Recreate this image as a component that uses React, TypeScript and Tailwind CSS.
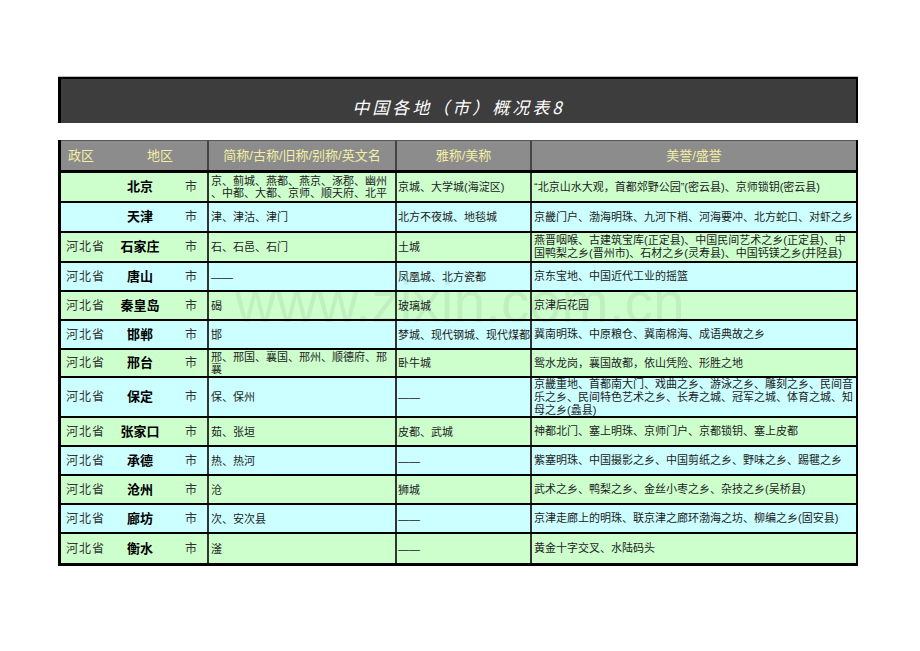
import React from "react";

type Row = {
  prov: string;
  name: string;
  abbr: string;
  alias: string;
  honor: string;
  h: string;
};

const rows: Row[] = [
  { prov: "", name: "北京", abbr: "京、蓟城、燕都、燕京、涿郡、幽州、中都、大都、京师、顺天府、北平", alias: "京城、大学城(海淀区)", honor: "“北京山水大观，首都郊野公园”(密云县)、京师锁钥(密云县)", h: "h-[30px]" },
  { prov: "", name: "天津", abbr: "津、津沽、津门", alias: "北方不夜城、地毯城", honor: "京畿门户、渤海明珠、九河下梢、河海要冲、北方蛇口、对虾之乡", h: "h-[30px]" },
  { prov: "河北省", name: "石家庄", abbr: "石、石邑、石门", alias: "土城", honor: "燕晋咽喉、古建筑宝库(正定县)、中国民间艺术之乡(正定县)、中国鸭梨之乡(晋州市)、石材之乡(灵寿县)、中国钙镁之乡(井陉县)", h: "h-[30px]" },
  { prov: "河北省", name: "唐山", abbr: "——", alias: "凤凰城、北方瓷都", honor: "京东宝地、中国近代工业的摇篮", h: "h-[29px]" },
  { prov: "河北省", name: "秦皇岛", abbr: "碣", alias: "玻璃城", honor: "京津后花园", h: "h-[29px]" },
  { prov: "河北省", name: "邯郸", abbr: "邯", alias: "梦城、现代钢城、现代煤都", honor: "冀南明珠、中原粮仓、冀南棉海、成语典故之乡", h: "h-[29px]" },
  { prov: "河北省", name: "邢台", abbr: "邢、邢国、襄国、邢州、顺德府、邢襄", alias: "卧牛城", honor: "鸳水龙岗，襄国故都，依山凭险、形胜之地", h: "h-[28px]" },
  { prov: "河北省", name: "保定", abbr: "保、保州", alias: "——", honor: "京畿重地、首都南大门、戏曲之乡、游泳之乡、雕刻之乡、民间音乐之乡、民间特色艺术之乡、长寿之城、冠军之城、体育之城、知母之乡(蠡县)", h: "h-[40px]" },
  { prov: "河北省", name: "张家口", abbr: "茹、张垣", alias: "皮都、武城", honor: "神都北门、塞上明珠、京师门户、京都锁钥、塞上皮都", h: "h-[29px]" },
  { prov: "河北省", name: "承德", abbr: "热、热河", alias: "——", honor: "紫塞明珠、中国摄影之乡、中国剪纸之乡、野味之乡、踢毽之乡", h: "h-[29px]" },
  { prov: "河北省", name: "沧州", abbr: "沧", alias: "狮城", honor: "武术之乡、鸭梨之乡、金丝小枣之乡、杂技之乡(吴桥县)", h: "h-[29px]" },
  { prov: "河北省", name: "廊坊", abbr: "次、安次县", alias: "——", honor: "京津走廊上的明珠、联京津之廊环渤海之坊、柳编之乡(固安县)", h: "h-[29px]" },
  { prov: "河北省", name: "衡水", abbr: "滏", alias: "——", honor: "黄金十字交叉、水陆码头", h: "h-[29px]" },
];

const cjk = "font-['Liberation_Sans','Noto_Sans_CJK_SC',sans-serif]";

export default function App() {
  return (
    <div className={`relative w-[920px] h-[651px] bg-white pt-[77px] pl-[58px] ${cjk}`}>
      {/* title strip */}
      <div className="w-[800px] h-[46px] bg-[#3d3d3d] border-t-2 border-l-[3px] border-r-2 border-black shadow-[0_-1px_0_#bbb] flex justify-center pt-[19px]">
        <span className="text-white text-[17px] italic tracking-[3px] font-['Noto_Sans_CJK_SC',serif] leading-none">
          中国各地（市）概况表8
        </span>
      </div>

      {/* table */}
      <div className="mt-[17px] w-[800px] border-l-[3px] border-r-2 border-b-[3px] border-black">
        <div className="flex h-[33px] bg-[#8c8c8c] border-t border-[#555] border-b-[3px] border-b-black text-[13px] text-[#f2eea4]">
          <div className="w-[148px] flex items-center border-r-2 border-[#444]">
            <span className="pl-[7px] w-[86px]">政区</span>
            <span>地区</span>
          </div>
          <div className="w-[188px] flex items-center justify-center border-r-2 border-[#444]">简称/古称/旧称/别称/英文名</div>
          <div className="w-[135px] flex items-center justify-center border-r-2 border-[#444]">雅称/美称</div>
          <div className="flex-1 flex items-center justify-center">美誉/盛誉</div>
        </div>

        {rows.map((r, i) => (
          <div
            key={r.name}
            className={`flex ${r.h} ${i % 2 === 0 ? "bg-[#ccffcc]" : "bg-[#ccffff]"} ${i < rows.length - 1 ? "border-b-2 border-black" : ""} text-[#222]`}
          >
            <div className="w-[148px] flex items-center border-r-2 border-[#333]">
              <span className="w-[50px] pl-[5px] text-[12px] tracking-[1px] text-[#333]">{r.prov}</span>
              <span className="w-[58px] text-center text-[13px] font-bold text-black">{r.name}</span>
              <span className="pl-[16px] text-[12px] text-[#333]">市</span>
            </div>
            <div className="w-[188px] flex items-center pl-[2px] text-[11px] leading-[12px] [line-break:anywhere] border-r-2 border-[#333]">
              <span>{r.abbr}</span>
            </div>
            <div className="w-[135px] flex items-center pl-[1px] text-[11px] leading-[12px] whitespace-nowrap border-r-2 border-[#333]">
              <span>{r.alias}</span>
            </div>
            <div className="flex-1 flex items-center pl-[2px] text-[11px] leading-[13px] [line-break:anywhere]">
              <span>{r.honor}</span>
            </div>
          </div>
        ))}
      </div>

      {/* watermark */}
      <div className="pointer-events-none absolute left-[235px] top-[274px] text-[57px] leading-none text-black/[0.06] font-['Liberation_Sans',sans-serif]">
        www.zixin.com.cn
      </div>
    </div>
  );
}
